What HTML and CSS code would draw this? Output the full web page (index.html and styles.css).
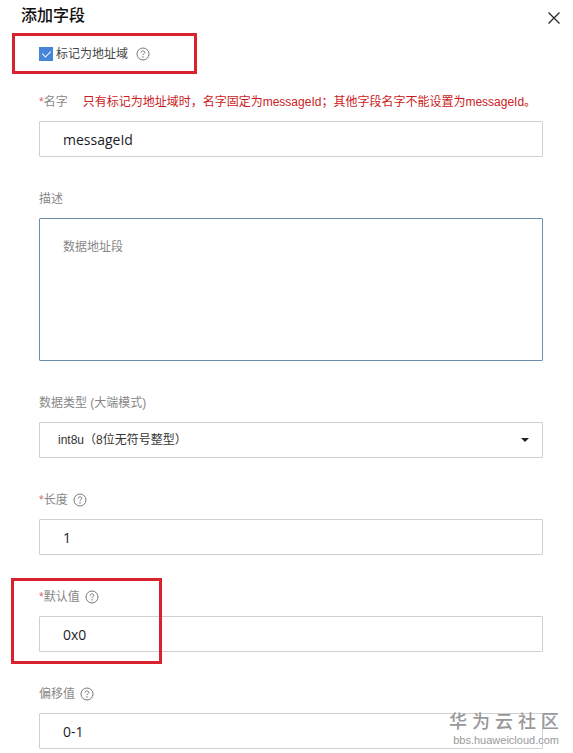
FILE: index.html
```
<!DOCTYPE html>
<html lang="zh-CN">
<head>
  <meta charset="UTF-8">
  <meta name="viewport" content="width=device-width, initial-scale=1.0">
  <title>添加字段</title>
  <link rel="stylesheet" href="styles.css">
</head>
<body>
  <svg class="sprite" aria-hidden="true">
    <symbol id="icon-help" viewBox="0 0 14 14">
      <circle cx="7" cy="7" r="6" fill="none" stroke="currentColor"/>
      <path d="M5.2 5.6c0-1.1.8-1.8 1.8-1.8s1.8.7 1.8 1.6c0 1.2-1.8 1.3-1.8 2.7" fill="none" stroke="currentColor"/>
      <path d="M6.4 9.2h1.2v1.2H6.4z" fill="currentColor"/>
    </symbol>
  </svg>

  <main class="dialog">
    <header class="dialog-header">
      <h1>添加字段</h1>
      <button class="close-button" type="button" aria-label="关闭">
        <svg width="12" height="12" viewBox="0 0 12 12"><path d="M.5.5l11 11M11.5.5l-11 11" stroke="#222" stroke-width="1.2"/></svg>
      </button>
    </header>

    <form>
      <div class="address-row">
        <input class="checkbox" type="checkbox" id="isAddress" checked>
        <label for="isAddress">标记为地址域</label>
        <button class="help" type="button" aria-label="帮助"><svg><use href="#icon-help"/></svg></button>
      </div>

      <div class="fields">
        <div class="field">
          <div class="field-label">
            <label for="name"><span class="required">*</span>名字</label>
            <span class="hint">只有标记为地址域时，名字固定为messageId；其他字段名字不能设置为messageId。</span>
          </div>
          <input class="control" type="text" id="name" value="messageId">
        </div>

        <div class="field">
          <div class="field-label">
            <label for="desc">描述</label>
          </div>
          <textarea class="control control-area" id="desc" placeholder="数据地址段"></textarea>
        </div>

        <div class="field">
          <div class="field-label">
            <label for="type">数据类型 (大端模式)</label>
          </div>
          <div class="select-wrap">
            <select class="control control-select" id="type">
              <option>int8u（8位无符号整型）</option>
            </select>
          </div>
        </div>

        <div class="field">
          <div class="field-label">
            <label for="length"><span class="required">*</span>长度</label>
            <button class="help" type="button" aria-label="帮助"><svg><use href="#icon-help"/></svg></button>
          </div>
          <input class="control" type="text" id="length" value="1">
        </div>

        <div class="field field-marked">
          <div class="field-label">
            <label for="default"><span class="required">*</span>默认值</label>
            <button class="help" type="button" aria-label="帮助"><svg><use href="#icon-help"/></svg></button>
          </div>
          <input class="control" type="text" id="default" value="0x0">
        </div>

        <div class="field">
          <div class="field-label">
            <label for="offset">偏移值</label>
            <button class="help" type="button" aria-label="帮助"><svg><use href="#icon-help"/></svg></button>
          </div>
          <input class="control" type="text" id="offset" value="0-1">
        </div>
      </div>
    </form>

    <div class="watermark">
      <span class="watermark-name">华 为 云 社 区</span>
      <span class="watermark-url">bbs.huaweicloud.com</span>
    </div>
  </main>
</body>
</html>
```
FILE: styles.css
```
*,
*::before,
*::after {
  box-sizing: border-box;
}

body {
  margin: 0;
  background: #fff;
  color: #666;
  font-family: "Liberation Sans", "Noto Sans CJK SC", sans-serif;
  font-size: 12px;
  line-height: 20px;
}

button {
  border: none;
  background: none;
  padding: 0;
  cursor: pointer;
}

.sprite {
  display: none;
}

.dialog {
  position: relative;
}

.dialog-header {
  display: flex;
  justify-content: space-between;
  align-items: flex-end;
  padding: 4px 13px 5px 21px;
}

.dialog-header h1 {
  margin: 0;
  color: #111;
  font-size: 16px;
  font-weight: 500;
  line-height: 24px;
}

.close-button {
  display: flex;
  align-items: center;
  height: 20px;
}

.address-row {
  display: flex;
  align-items: center;
  width: fit-content;
  height: 41px;
  margin-left: 12px;
  padding: 0 44px 0 24px;
  border: 3px solid #d9222e;
}

.address-row label {
  margin: 0 8px 0 3px;
  color: #444;
}

.checkbox {
  appearance: none;
  display: flex;
  justify-content: center;
  width: 14px;
  height: 14px;
  margin: 0;
  background: #4586d8;
}

.checkbox:checked::after {
  content: "";
  width: 5px;
  height: 8px;
  margin-top: 2px;
  border: solid #fff;
  border-width: 0 1px 1px 0;
  transform: rotate(45deg);
}

.help {
  display: flex;
  color: #777;
}

.help svg {
  width: 14px;
  height: 14px;
}

.fields {
  display: flex;
  flex-direction: column;
  gap: 32px;
  padding: 18px 30px 4px 39px;
}

.field-label {
  display: flex;
  align-items: center;
  gap: 5px;
  margin-bottom: 9px;
  color: #888;
}

.required {
  color: #d9626a;
}

.hint {
  margin-left: 10px;
  color: #cc1a22;
  white-space: nowrap;
}

.control {
  display: block;
  width: 100%;
  height: 36px;
  margin: 0;
  padding: 0 23px;
  border: 1px solid #d0d0d0;
  border-radius: 1px;
  outline: none;
  background: #fff;
  color: #1c1c28;
  font-family: "Open Sans", "Noto Sans CJK SC", sans-serif;
  font-size: 14px;
}

.control-area {
  height: 143px;
  padding: 18px 23px;
  border-color: #6d8fae;
  font-size: 12px;
  line-height: 20px;
  resize: none;
}

.control-area::placeholder {
  color: #888;
}

.select-wrap {
  display: grid;
  align-items: center;
}

.select-wrap > *,
.select-wrap::after {
  grid-area: 1 / 1;
}

.select-wrap::after {
  content: "";
  justify-self: end;
  margin-right: 14px;
  border: 4px solid transparent;
  border-top-color: #222;
  border-bottom: none;
  pointer-events: none;
}

.control-select {
  appearance: none;
  padding: 0 18px;
  color: #333;
  font-family: "Liberation Sans", "Noto Sans CJK SC", sans-serif;
  font-size: 12px;
}

/* red frame around the default value */
.field-marked {
  position: relative;
}

.field-marked::after {
  content: "";
  position: absolute;
  top: -9px;
  bottom: -12px;
  left: -28px;
  width: 151px;
  border: 3px solid #d9222e;
  pointer-events: none;
}

.watermark {
  position: absolute;
  right: 14px;
  bottom: 7px;
  display: flex;
  flex-direction: column;
  align-items: flex-end;
  gap: 2px;
  color: #999;
  pointer-events: none;
}

.watermark-name {
  font-size: 18px;
  font-weight: 500;
  line-height: 20px;
}

.watermark-url {
  font-size: 11px;
  line-height: 12px;
}
```
